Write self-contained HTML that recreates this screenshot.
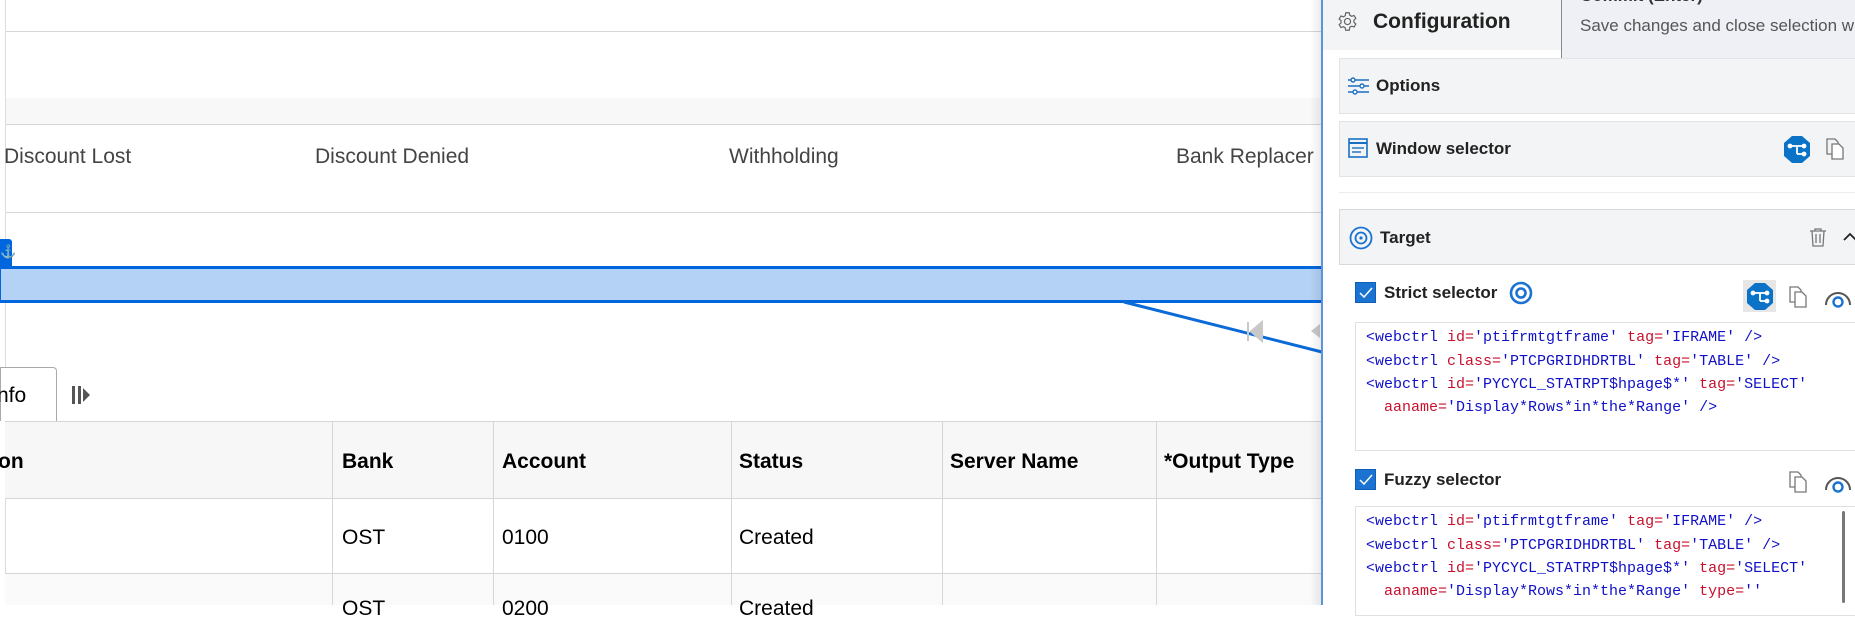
<!DOCTYPE html>
<html><head><meta charset="utf-8"><style>
*{margin:0;padding:0;box-sizing:border-box}
body{width:1855px;height:605px;overflow:hidden;background:#fff;position:relative;font-family:"Liberation Sans",Arial,sans-serif}
.a{position:absolute}
.t{position:absolute;font-size:21px;color:#444;white-space:nowrap;line-height:1}
.h{font-weight:bold;color:#000}
.b{color:#000}
.card{position:absolute;left:1339px;width:530px;background:#f3f4f5;border:1px solid #e2e3e4}
.ct{position:absolute;font-family:"Liberation Sans","DejaVu Sans",sans-serif;font-weight:bold;font-size:17px;color:#222;white-space:nowrap}
.code{position:absolute;left:1355px;width:520px;background:#fff;border:1px solid #e0e0e0;font-family:"Liberation Mono",monospace;font-size:15px;white-space:pre;color:#1010c8}
.code div{position:absolute;left:10px}
.r{color:#c8102e}
.cb{position:absolute;width:21px;height:21px;background:#1a73d1;border:1px solid #0e5fb5}
</style></head><body>
<!-- left app -->
<div class="a" style="left:5px;top:0;width:1px;height:605px;background:#ddd"></div>
<div class="a" style="left:6px;top:31px;width:1320px;height:1px;background:#d4d7da"></div>
<div class="a" style="left:6px;top:98px;width:1320px;height:27px;background:#f8f8f8;border-bottom:1px solid #d4d7da"></div>
<div class="t" style="left:4px;top:146px">Discount Lost</div>
<div class="t" style="left:315px;top:146px">Discount Denied</div>
<div class="t" style="left:729px;top:146px">Withholding</div>
<div class="t" style="left:1176px;top:146px">Bank Replacer</div>
<div class="a" style="left:6px;top:212px;width:1320px;height:1px;background:#d4d7da"></div>
<div class="a" style="left:0;top:239px;width:12px;height:28px;background:#0066dd;border-radius:0 3px 0 0;color:#fff;font-size:13px;text-align:center;line-height:26px">⚓</div>
<div class="a" style="left:0;top:266px;width:1325px;height:37px;background:#b3d2f5;border-top:3px solid #0066dd;border-bottom:3px solid #0066dd;border-left:1px solid #0066dd"></div>
<svg class="a" style="left:0;top:0" width="1330" height="605"><line x1="1124" y1="302" x2="1322" y2="352" stroke="#0a6ad8" stroke-width="3"/>
<path d="M1248 322v19M1262 322l-11 9.5 11 9.5z" stroke="#c8c8c8" stroke-width="2" fill="#c8c8c8"/>
<path d="M1320 324l-9 7 9 7z" fill="#c8c8c8"/></svg>
<div class="a" style="left:0;top:367px;width:57px;height:54px;border:1px solid #aaa;border-bottom:none;border-radius:0 4px 0 0;background:#fff"></div>
<div class="t b" style="left:-3px;top:385px;font-size:21px">nfo</div>
<svg class="a" style="left:72px;top:385px" width="22" height="20"><rect x="0" y="1" width="3" height="18" fill="#555"/><rect x="6" y="1" width="3" height="18" fill="#555"/><path d="M11 3l7 7-7 7z" fill="#555"/></svg>
<div class="a" style="left:5px;top:421px;width:1320px;height:78px;background:#f7f7f7;border-top:1px solid #d4d7da;border-bottom:1px solid #d4d7da"></div>
<div class="a" style="left:5px;top:573px;width:1320px;height:1px;background:#d4d7da"></div>
<div class="a" style="left:5px;top:574px;width:1320px;height:31px;background:#fafafa"></div>
<div class="a" style="left:332px;top:421px;width:1px;height:184px;background:#d4d7da"></div>
<div class="a" style="left:493px;top:421px;width:1px;height:184px;background:#d4d7da"></div>
<div class="a" style="left:731px;top:421px;width:1px;height:184px;background:#d4d7da"></div>
<div class="a" style="left:942px;top:421px;width:1px;height:184px;background:#d4d7da"></div>
<div class="a" style="left:1156px;top:421px;width:1px;height:184px;background:#d4d7da"></div>
<div class="t h" style="left:-2px;top:451px">on</div>
<div class="t h" style="left:342px;top:451px">Bank</div>
<div class="t h" style="left:502px;top:451px">Account</div>
<div class="t h" style="left:739px;top:451px">Status</div>
<div class="t h" style="left:950px;top:451px">Server Name</div>
<div class="t h" style="left:1164px;top:451px">*Output Type</div>
<div class="t b" style="left:342px;top:527px">OST</div>
<div class="t b" style="left:502px;top:527px">0100</div>
<div class="t b" style="left:739px;top:527px">Created</div>
<div class="t b" style="left:342px;top:598px">OST</div>
<div class="t b" style="left:502px;top:598px">0200</div>
<div class="t b" style="left:739px;top:598px">Created</div>
<!-- panel -->
<div class="a" style="left:1310px;top:0;width:11px;height:605px;background:linear-gradient(90deg,rgba(0,0,0,0),rgba(0,0,0,.08))"></div>
<div class="a" style="left:1321px;top:0;width:534px;height:605px;background:#fff;border-left:2px solid #5a95dc"></div>
<div class="a" style="left:1323px;top:0;width:240px;height:50px;background:#f3f4f5"></div>
<svg class="a" style="left:1337px;top:11px" width="21" height="21" viewBox="0 0 24 24" fill="none" stroke="#666" stroke-width="1.4"><circle cx="12" cy="12" r="3.5"/><path d="M10 2h4l.6 2.8 2.2 1.3 2.7-1 2 3.4-2.1 1.9v2.6l2.1 1.9-2 3.4-2.7-1-2.2 1.3L14 22h-4l-.6-2.8-2.2-1.3-2.7 1-2-3.4 2.1-1.9v-2.6L2.5 9.1l2-3.4 2.7 1 2.2-1.3z"/></svg>
<div class="ct" style="left:1373px;top:10px;font-size:21px">Configuration</div>
<div class="a" style="left:1561px;top:-2px;width:300px;height:63px;background:#eff0f6;border:1px solid #888;border-right:none"></div>
<div class="a" style="left:1580px;top:-14px;font-size:17px;font-weight:bold;color:#333;white-space:nowrap">Commit (Enter)</div>
<div class="a" style="left:1580px;top:16px;font-size:17px;color:#555;white-space:nowrap;font-family:'Liberation Sans','DejaVu Sans',sans-serif">Save changes and close selection w</div>
<div class="card" style="top:58px;height:56px"></div>
<svg class="a" style="left:1348px;top:77px" width="21" height="18"><g stroke="#1a6fc4" stroke-width="1.6"><line x1="0" y1="3" x2="21" y2="3"/><line x1="0" y1="9" x2="21" y2="9"/><line x1="0" y1="15" x2="21" y2="15"/></g><g fill="#fff" stroke="#1a6fc4" stroke-width="1.4"><circle cx="5" cy="3" r="2"/><circle cx="14" cy="9" r="2"/><circle cx="7" cy="15" r="2"/></g></svg>
<div class="ct" style="left:1376px;top:76px">Options</div>
<div class="card" style="top:121px;height:56px"></div>
<svg class="a" style="left:1348px;top:138px" width="20" height="20"><rect x="1" y="1" width="18" height="18" fill="none" stroke="#1a6fc4" stroke-width="1.6"/><line x1="1" y1="5" x2="19" y2="5" stroke="#1a6fc4" stroke-width="2"/><line x1="4" y1="10" x2="16" y2="10" stroke="#1a6fc4" stroke-width="1.4"/><line x1="4" y1="14" x2="13" y2="14" stroke="#1a6fc4" stroke-width="1.4"/></svg>
<div class="ct" style="left:1376px;top:139px">Window selector</div>
<svg class="a" style="left:1784px;top:136px" width="26" height="27" viewBox="0 0 26 27"><path d="M8 0h10l8 7v13l-8 7H8l-8-7V7z" fill="#0a73c8"/><g stroke="#fff" stroke-width="1.8" fill="#fff"><line x1="6" y1="10" x2="20" y2="10"/><line x1="13" y1="10" x2="13" y2="18"/><line x1="13" y1="18" x2="20" y2="18"/><circle cx="6" cy="10" r="1.5"/><circle cx="20" cy="10" r="1.5"/><circle cx="20" cy="18" r="1.5"/></g></svg>
<svg class="a" style="left:1826px;top:138px" width="20" height="22" fill="none" stroke="#777" stroke-width="1.3"><path d="M1 1h8l3 3v12H1z"/><path d="M6 6h7l4 4v11H6z" fill="#fff"/></svg>
<div class="a" style="left:1339px;top:192px;width:520px;height:1px;background:#ececec"></div>
<div class="card" style="top:209px;height:56px;border-color:#d8d9da"></div>
<svg class="a" style="left:1349px;top:226px" width="24" height="24"><circle cx="12" cy="12" r="10.5" fill="none" stroke="#1a73d1" stroke-width="1.8"/><circle cx="12" cy="12" r="5.5" fill="none" stroke="#1a73d1" stroke-width="1.8"/><circle cx="12" cy="12" r="1.6" fill="#1a73d1"/></svg>
<div class="ct" style="left:1380px;top:228px">Target</div>
<svg class="a" style="left:1810px;top:228px" width="16" height="19" fill="none" stroke="#777" stroke-width="1.3"><path d="M0 3h16M5 3V1h6v2M2 3l1 15h10l1-15M6 6v9M10 6v9"/></svg>
<svg class="a" style="left:1843px;top:232px" width="14" height="10"><path d="M1 8l6-6 6 6" fill="none" stroke="#222" stroke-width="1.8"/></svg>
<div class="cb" style="left:1355px;top:282px"></div>
<svg class="a" style="left:1358px;top:286px" width="16" height="14"><path d="M2 7l4 4 8-9" fill="none" stroke="#fff" stroke-width="1.5"/></svg>
<div class="ct" style="left:1384px;top:283px">Strict selector</div>
<svg class="a" style="left:1509px;top:281px" width="24" height="24"><circle cx="12" cy="12" r="10" fill="none" stroke="#1a73d1" stroke-width="2.6"/><circle cx="12" cy="12" r="4.5" fill="none" stroke="#1a73d1" stroke-width="2.6"/></svg>
<div class="a" style="left:1743px;top:280px;width:33px;height:32px;background:#e6e6e6"></div>
<svg class="a" style="left:1747px;top:283px" width="26" height="27" viewBox="0 0 26 27"><path d="M8 0h10l8 7v13l-8 7H8l-8-7V7z" fill="#0a73c8"/><g stroke="#fff" stroke-width="1.8" fill="#fff"><line x1="6" y1="10" x2="20" y2="10"/><line x1="13" y1="10" x2="13" y2="18"/><line x1="13" y1="18" x2="20" y2="18"/><circle cx="6" cy="10" r="1.5"/><circle cx="20" cy="10" r="1.5"/><circle cx="20" cy="18" r="1.5"/></g></svg>
<svg class="a" style="left:1789px;top:286px" width="20" height="22" fill="none" stroke="#777" stroke-width="1.3"><path d="M1 1h8l3 3v12H1z"/><path d="M6 6h7l4 4v11H6z" fill="#fff"/></svg>
<svg class="a" style="left:1824px;top:289px" width="28" height="20"><path d="M2 16a12 12 0 0 1 24 0" fill="none" stroke="#555" stroke-width="2"/><circle cx="14" cy="13" r="4.5" fill="none" stroke="#1a73d1" stroke-width="2.4"/></svg>
<div class="code" style="top:322px;height:129px">
<div style="top:6px">&lt;webctrl <span class="r">id=</span>'ptifrmtgtframe' <span class="r">tag=</span>'IFRAME' /&gt;</div>
<div style="top:30px">&lt;webctrl <span class="r">class=</span>'PTCPGRIDHDRTBL' <span class="r">tag=</span>'TABLE' /&gt;</div>
<div style="top:53px">&lt;webctrl <span class="r">id=</span>'PYCYCL_STATRPT$hpage$*' <span class="r">tag=</span>'SELECT'</div>
<div style="top:76px">  <span class="r">aaname=</span>'Display*Rows*in*the*Range' /&gt;</div>
</div>
<div class="cb" style="left:1355px;top:469px"></div>
<svg class="a" style="left:1358px;top:473px" width="16" height="14"><path d="M2 7l4 4 8-9" fill="none" stroke="#fff" stroke-width="1.5"/></svg>
<div class="ct" style="left:1384px;top:470px">Fuzzy selector</div>
<svg class="a" style="left:1789px;top:471px" width="20" height="22" fill="none" stroke="#777" stroke-width="1.3"><path d="M1 1h8l3 3v12H1z"/><path d="M6 6h7l4 4v11H6z" fill="#fff"/></svg>
<svg class="a" style="left:1824px;top:474px" width="28" height="20"><path d="M2 16a12 12 0 0 1 24 0" fill="none" stroke="#555" stroke-width="2"/><circle cx="14" cy="13" r="4.5" fill="none" stroke="#1a73d1" stroke-width="2.4"/></svg>
<div class="code" style="top:506px;height:110px">
<div style="top:6px">&lt;webctrl <span class="r">id=</span>'ptifrmtgtframe' <span class="r">tag=</span>'IFRAME' /&gt;</div>
<div style="top:30px">&lt;webctrl <span class="r">class=</span>'PTCPGRIDHDRTBL' <span class="r">tag=</span>'TABLE' /&gt;</div>
<div style="top:53px">&lt;webctrl <span class="r">id=</span>'PYCYCL_STATRPT$hpage$*' <span class="r">tag=</span>'SELECT'</div>
<div style="top:76px">  <span class="r">aaname=</span>'Display*Rows*in*the*Range' <span class="r">type=</span>''</div>
</div>
<div class="a" style="left:1842px;top:511px;width:3px;height:92px;background:#777;border-radius:2px"></div>
</body></html>
